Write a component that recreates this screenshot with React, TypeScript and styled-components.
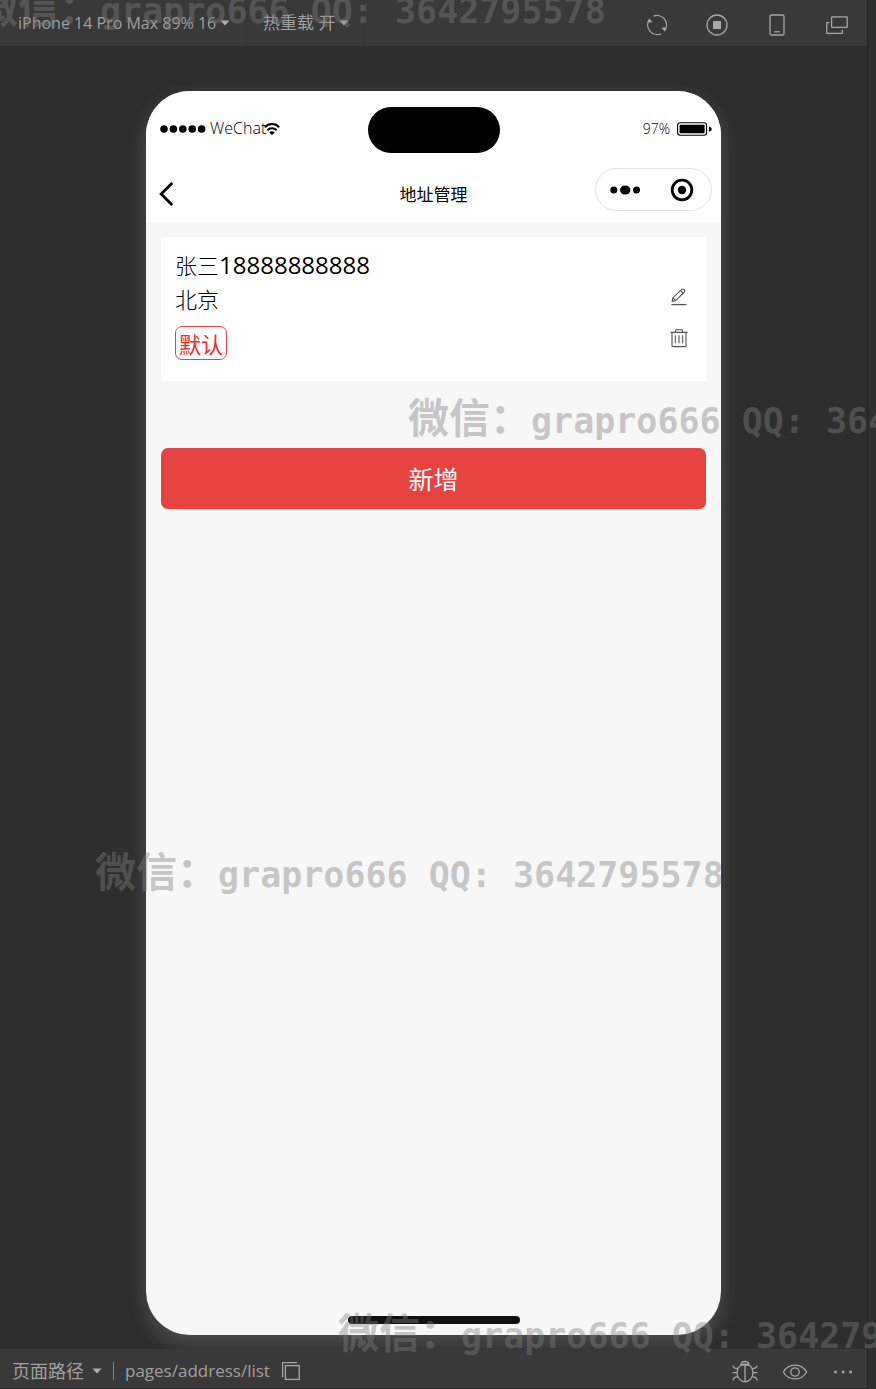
import React from 'react';
import styled, { createGlobalStyle } from 'styled-components';

const latin = '"Open Sans", "Noto Sans CJK SC", sans-serif';

const GlobalStyle = createGlobalStyle`
  *, *::before, *::after { box-sizing: border-box; }
  body { margin: 0; background: #2e2e2e; }
  button, select { font: inherit; color: inherit; background: none; border: 0; padding: 0; margin: 0; cursor: pointer; }
  svg { display: block; flex: none; }
`;

const Shell = styled.div`
  position: relative;
  display: flex;
  min-height: 100vh;
  overflow: hidden;
  font-family: ${latin};
  color: #a0a0a0;
`;

const Simulator = styled.main`
  flex: 1;
  min-width: 0;
  display: flex;
  flex-direction: column;
  border-bottom: 1px solid #252525;
`;

const SideRail = styled.aside`
  width: 9px;
  background: #2f2f2f;
  border-left: 1px solid #222;
`;

const Bar = styled.div<{ $height: number; $end: number }>`
  display: flex;
  align-items: center;
  justify-content: space-between;
  height: ${(p) => p.$height}px;
  padding-right: ${(p) => p.$end}px;
  background: #393939;
`;

const BarGroup = styled.div<{ $gap: number; $top?: number }>`
  display: flex;
  align-items: center;
  align-self: stretch;
  gap: ${(p) => p.$gap}px;
  padding-top: ${(p) => p.$top ?? 0}px;
`;

const Cell = styled.label<{ $start: number; $end: number }>`
  display: flex;
  align-items: center;
  align-self: stretch;
  gap: 3px;
  padding: 0 ${(p) => p.$end}px 0 ${(p) => p.$start}px;
  border-right: 1px solid #343434;
`;

const Picker = styled.select<{ $size: number }>`
  appearance: none;
  font-size: ${(p) => p.$size}px;
  line-height: 24px;
  outline: none;
`;

const IconButton = styled.button`
  display: flex;
  align-items: center;
  justify-content: center;
`;

const Canvas = styled.section`
  flex: 1;
  display: flex;
  padding: 45px 146px 14px;
  overflow: hidden;
`;

const Phone = styled.div`
  flex: 1;
  min-width: 0;
  display: flex;
  flex-direction: column;
  border-radius: 44px;
  background: #f7f7f7;
  color: #000;
  overflow: hidden;
  box-shadow: 0 8px 20px rgba(255, 255, 255, 0.16);
`;

const PhoneTop = styled.header`
  background: #fff;
`;

const StatusBar = styled.div`
  display: grid;
  grid-template-columns: 1fr 132px 1fr;
  align-items: center;
  padding-top: 16px;
  height: 62px;
`;

const Island = styled.div`
  height: 46px;
  border-radius: 23px;
  background: #000;
`;

const StatusGroup = styled.div<{ $right?: boolean }>`
  display: flex;
  align-items: center;
  justify-content: ${(p) => (p.$right ? 'flex-end' : 'flex-start')};
  gap: ${(p) => (p.$right ? 7 : 0)}px;
  padding: 0 9px 2px 14px;
  font-weight: 300;
  font-size: ${(p) => (p.$right ? 14 : 16)}px;
  line-height: 20px;
`;

const Carrier = styled.span`
  padding: 0 0 2px 4px;
  margin-right: -2px;
`;

const NavBar = styled.div`
  display: grid;
  grid-template-columns: 1fr auto 1fr;
  align-items: center;
  height: 69px;
  padding: 8px 0 4px;
`;

const PageTitle = styled.h1`
  margin: 8px 0 0;
  font-family: "Noto Sans CJK SC", sans-serif;
  font-weight: 400;
  font-size: 17px;
  line-height: 24px;
`;

const BackButton = styled(IconButton)`
  justify-self: start;
  margin: 8px 0 0 13px;
`;

const Capsule = styled.div`
  justify-self: end;
  display: flex;
  width: 117px;
  height: 43px;
  margin-right: 9px;
  border: 1px solid #e2e2e2;
  border-radius: 22px;
  & > button { flex: 1; }
`;

const Content = styled.div`
  flex: 1;
  padding: 15px;
`;

const AddressCard = styled.article`
  display: flex;
  align-items: center;
  justify-content: space-between;
  padding: 10px 17px 21px 14px;
  background: #fff;
`;

const AddressText = styled.div`
  display: flex;
  flex-direction: column;
  align-items: flex-start;
  font-family: "Noto Sans CJK SC", sans-serif;
  font-weight: 300;
  font-size: 22px;
  line-height: 34px;
  color: #000;
`;

const PhoneNumber = styled.span`
  font-family: "Open Sans", sans-serif;
  font-weight: 400;
  font-size: 24px;
`;

const Contact = styled.div`
  height: 34px;
`;

const DefaultTag = styled.span`
  margin-top: 11px;
  height: 34px;
  padding: 0 3px;
  border: 1px solid #e64340;
  border-radius: 7px;
  line-height: 32px;
  font-weight: 400;
  color: #f02a2a;
`;

const Actions = styled.div`
  display: flex;
  flex-direction: column;
  gap: 21px;
  padding-top: 28px;
`;

const AddButton = styled.button`
  display: block;
  width: 100%;
  height: 61px;
  margin-top: 67px;
  border-radius: 7px;
  background: #e64340;
  color: #fff;
  font-family: "Noto Sans CJK SC", sans-serif;
  font-size: 25px;
  line-height: 61px;
`;

const HomeIndicator = styled.div`
  align-self: center;
  width: 172px;
  height: 8px;
  margin-bottom: 11px;
  border-radius: 4px;
  background: #111;
`;

const PathGroup = styled(BarGroup)`
  padding-left: 12px;
  font-size: 17px;
  line-height: 24px;
`;

const PathPicker = styled.label`
  display: flex;
  align-items: center;
  gap: 8px;
`;

const Separator = styled.span`
  width: 1px;
  height: 18px;
  background: #808080;
`;

const Watermark = styled.div<{ $left: number; $top: number }>`
  position: absolute;
  left: ${(p) => p.$left}px;
  top: ${(p) => p.$top}px;
  font-family: "DejaVu Sans Mono", monospace;
  font-weight: 700;
  font-size: 35px;
  line-height: 48px;
  white-space: pre;
  color: rgba(128, 128, 128, 0.41);
  pointer-events: none;
`;

const WatermarkHan = styled.span`
  font-family: "Noto Sans CJK SC", sans-serif;
  font-size: 41px;
`;

const Caret = () => (
  <svg width="10" height="6" viewBox="0 0 10 6" aria-hidden="true">
    <path d="M0.5 0.5h9L5 5.5z" fill="#b0b0b0" />
  </svg>
);

const ToolIcon = ({ children, size = 24 }: { children: React.ReactNode; size?: number }) => (
  <svg
    width={size}
    height={size}
    viewBox={`0 0 ${size} ${size}`}
    fill="none"
    stroke="#a6a6a6"
    strokeWidth="1.3"
    aria-hidden="true"
  >
    {children}
  </svg>
);

const watermarks = [
  { left: -23, top: -19 },
  { left: 408, top: 391 },
  { left: 95, top: 845 },
  { left: 338, top: 1306 },
];

export default function App() {
  return (
    <>
      <GlobalStyle />
      <Shell>
        <Simulator>
          <Bar $height={46} $end={18}>
            <BarGroup $gap={0}>
              <Cell $start={18} $end={16}>
                <Picker $size={16} aria-label="设备">
                  <option>iPhone 14 Pro Max 89% 16</option>
                </Picker>
                <Caret />
              </Cell>
              <Cell $start={16} $end={15}>
                <Picker $size={17} aria-label="热重载">
                  <option>热重载 开</option>
                </Picker>
                <Caret />
              </Cell>
            </BarGroup>
            <BarGroup $gap={36} $top={4}>
              <IconButton aria-label="刷新">
                <ToolIcon>
                  <path d="M4.6 6.2A9.6 9.6 0 0 0 16 20.8" />
                  <path d="M8.4 3.1A9.6 9.6 0 0 1 19.6 17.8" />
                  <path d="M4.2 5.2l3.3 4-4.3.4zM19.8 18.8l-3.2-4 4.2-.5z" fill="#a6a6a6" stroke="none" />
                </ToolIcon>
              </IconButton>
              <IconButton aria-label="停止">
                <ToolIcon>
                  <circle cx="12" cy="12" r="10" />
                  <rect x="8" y="8" width="8" height="8" fill="#a6a6a6" stroke="none" />
                </ToolIcon>
              </IconButton>
              <IconButton aria-label="设备外观">
                <ToolIcon>
                  <rect x="5" y="2" width="14" height="20" rx="1.6" />
                  <path d="M9.2 18.8h5.6" />
                </ToolIcon>
              </IconButton>
              <IconButton aria-label="分离窗口">
                <ToolIcon>
                  <rect x="6.6" y="3.8" width="15.6" height="10.6" rx="0.6" />
                  <path d="M4.6 9.6H1.8v10.8h15.6v-3.6" />
                </ToolIcon>
              </IconButton>
            </BarGroup>
          </Bar>

          <Canvas>
            <Phone>
              <PhoneTop>
                <StatusBar>
                  <StatusGroup>
                    <svg width="46" height="8" viewBox="0 0 46 8" aria-hidden="true">
                      {[4, 13.4, 22.8, 32.2, 41.6].map((x) => (
                        <circle key={x} cx={x} cy="4" r="3.8" />
                      ))}
                    </svg>
                    <Carrier>WeChat</Carrier>
                    <svg width="16" height="14" viewBox="0 0 16 14" fill="none" stroke="#000" strokeWidth="2" aria-hidden="true">
                      <path d="M0.8 5.2c4-4.2 10.4-4.2 14.4 0" />
                      <path d="M3.4 8.2c2.6-2.7 6.6-2.7 9.2 0" />
                      <path d="M8 13L5.2 10.4c1.6-1.6 4-1.6 5.6 0z" fill="#000" stroke="none" />
                    </svg>
                  </StatusGroup>
                  <Island />
                  <StatusGroup $right>
                    <span>97%</span>
                    <svg width="35" height="14" viewBox="0 0 35 14" aria-hidden="true">
                      <rect x="0.6" y="0.8" width="29" height="12.4" rx="2.6" fill="none" stroke="#000" strokeWidth="1.1" />
                      <rect x="2.6" y="2.8" width="25" height="8.4" rx="1" />
                      <path d="M32 4.4c3.6 0.4 3.6 4.8 0 5.2z" />
                    </svg>
                  </StatusGroup>
                </StatusBar>
                <NavBar>
                  <BackButton aria-label="返回">
                    <svg width="16" height="24" viewBox="0 0 16 24" fill="none" stroke="#000" strokeWidth="2.8" strokeLinecap="round" aria-hidden="true">
                      <path d="M12.4 1.8L2.2 12l10.2 10.2" />
                    </svg>
                  </BackButton>
                  <PageTitle>地址管理</PageTitle>
                  <Capsule>
                    <IconButton aria-label="更多">
                      <svg width="30" height="12" viewBox="0 0 30 12" aria-hidden="true">
                        <circle cx="3.8" cy="6" r="3.5" />
                        <ellipse cx="15.2" cy="6" rx="5.2" ry="4.6" />
                        <circle cx="26.6" cy="6" r="3.5" />
                      </svg>
                    </IconButton>
                    <IconButton aria-label="关闭">
                      <svg width="24" height="24" viewBox="0 0 24 24" aria-hidden="true">
                        <circle cx="12" cy="12" r="9.8" fill="none" stroke="#000" strokeWidth="2.8" />
                        <circle cx="12" cy="12" r="4.2" />
                      </svg>
                    </IconButton>
                  </Capsule>
                </NavBar>
              </PhoneTop>

              <Content>
                <AddressCard>
                  <AddressText>
                    <Contact>
                      张三<PhoneNumber>18888888888</PhoneNumber>
                    </Contact>
                    <div>北京</div>
                    <DefaultTag>默认</DefaultTag>
                  </AddressText>
                  <Actions>
                    <IconButton aria-label="编辑">
                      <svg width="20" height="20" viewBox="0 0 20 20" fill="none" stroke="#555" strokeWidth="1.1" strokeLinejoin="round" aria-hidden="true">
                        <path d="M3.2 14.6l.6-3.8 9-8.4c1.4-1 3.6.6 2.8 2.4l-8.8 8.6z" />
                        <path d="M11.6 3.6l2.8 2.8M3.8 10.8l3 2.6" />
                        <path d="M2.4 17.6h15" strokeWidth="1.3" />
                      </svg>
                    </IconButton>
                    <IconButton aria-label="删除">
                      <svg width="20" height="20" viewBox="0 0 20 20" fill="none" stroke="#555" strokeWidth="1.1" aria-hidden="true">
                        <path d="M1.4 4.4h17.2" strokeWidth="1.3" />
                        <path d="M6.2 4.2l.8-2.4h6l.8 2.4" />
                        <path d="M3 4.6v13c0 .6.4 1 1 1h12c.6 0 1-.4 1-1v-13" />
                        <path d="M6.4 7.2v8M10 7.2v8M13.6 7.2v8" stroke="#777" strokeWidth="1.4" />
                      </svg>
                    </IconButton>
                  </Actions>
                </AddressCard>
                <AddButton>新增</AddButton>
              </Content>
              <HomeIndicator />
            </Phone>
          </Canvas>

          <Bar $height={39} $end={9}>
            <PathGroup $gap={11} $top={4}>
              <PathPicker>
                <Picker $size={18} aria-label="页面路径">
                  <option>页面路径</option>
                </Picker>
                <Caret />
              </PathPicker>
              <Separator />
              <span>pages/address/list</span>
              <IconButton aria-label="复制路径">
                <ToolIcon size={20}>
                  <path d="M1.6 16V1.6H16" />
                  <rect x="4.4" y="4.6" width="13.8" height="13.8" />
                </ToolIcon>
              </IconButton>
            </PathGroup>
            <BarGroup $gap={24} $top={6}>
              <IconButton aria-label="调试">
                <ToolIcon size={26}>
                  <ellipse cx="13" cy="13.8" rx="8" ry="9" />
                  <path d="M9 5.8c.2-4.4 7.8-4.4 8 0M8.6 6h8.8M13 6v16.6" />
                  <path d="M1 6.4c0 2.4 1.6 3 4.8 3M0.6 13.6H5M1 21.4c0-2.8 1.6-3.6 4.8-3.6M25 6.4c0 2.4-1.6 3-4.8 3M25.4 13.6H21M25 21.4c0-2.8-1.6-3.6-4.8-3.6" />
                </ToolIcon>
              </IconButton>
              <IconButton aria-label="预览">
                <ToolIcon size={26}>
                  <path d="M1.4 13C6.6 3.8 19.4 3.8 24.6 13 19.4 22.2 6.6 22.2 1.4 13z" />
                  <circle cx="13" cy="13" r="4.2" />
                </ToolIcon>
              </IconButton>
              <IconButton aria-label="更多操作">
                <ToolIcon size={26}>
                  <path d="M2.2 13h2.6M9.8 13h2.6M17.4 13h2.6" strokeWidth="2.6" />
                </ToolIcon>
              </IconButton>
            </BarGroup>
          </Bar>
        </Simulator>
        <SideRail />
        {watermarks.map((w) => (
          <Watermark key={w.top} $left={w.left} $top={w.top} aria-hidden="true">
            <WatermarkHan>微信：</WatermarkHan>grapro666 QQ: 3642795578
          </Watermark>
        ))}
      </Shell>
    </>
  );
}
